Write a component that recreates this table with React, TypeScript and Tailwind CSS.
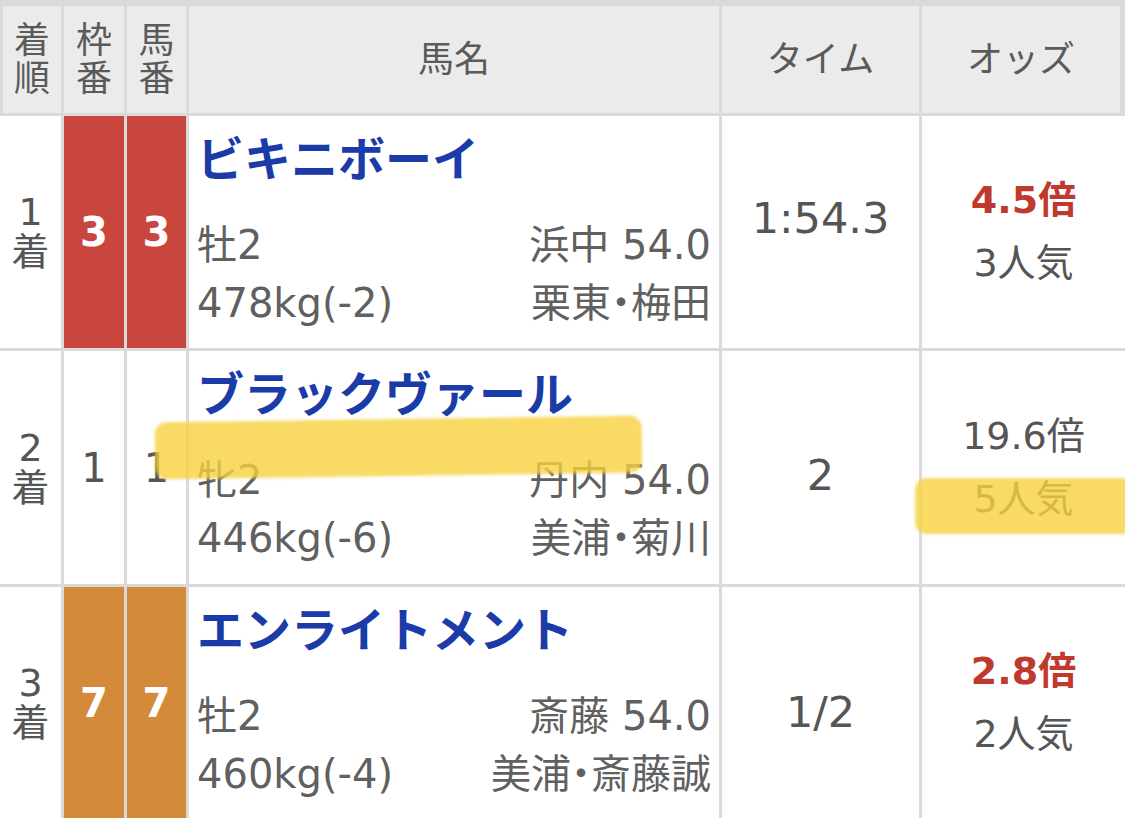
type Row = {
  rank: string;
  waku: string;
  uma: string;
  frame: string;
  numColor: string;
  name: string;
  sexAge: string;
  weight: string;
  jockey: string;
  trainer: string;
  time: string;
  timePad: string;
  odds: string;
  oddsClass: string;
  pop: string;
  height: string;
};

const rows: Row[] = [
  {
    rank: "1",
    waku: "3",
    uma: "3",
    frame: "bg-[#c9463e]",
    numColor: "text-white font-bold",
    name: "ビキニボーイ",
    sexAge: "牡2",
    weight: "478kg(-2)",
    jockey: "浜中 54.0",
    trainer: "栗東・梅田",
    time: "1:54.3",
    timePad: "pb-[28px]",
    odds: "4.5倍",
    oddsClass: "text-[#c0392f] font-bold",
    pop: "3人気",
    height: "h-[232px]",
  },
  {
    rank: "2",
    waku: "1",
    uma: "1",
    frame: "bg-white",
    numColor: "text-[#555]",
    name: "ブラックヴァール",
    sexAge: "牝2",
    weight: "446kg(-6)",
    jockey: "丹内 54.0",
    trainer: "美浦・菊川",
    time: "2",
    timePad: "pt-[16px]",
    odds: "19.6倍",
    oddsClass: "text-[#555]",
    pop: "5人気",
    height: "h-[233px]",
  },
  {
    rank: "3",
    waku: "7",
    uma: "7",
    frame: "bg-[#d48a3b]",
    numColor: "text-white font-bold",
    name: "エンライトメント",
    sexAge: "牡2",
    weight: "460kg(-4)",
    jockey: "斎藤 54.0",
    trainer: "美浦・斎藤誠",
    time: "1/2",
    timePad: "pt-[18px]",
    odds: "2.8倍",
    oddsClass: "text-[#c0392f] font-bold",
    pop: "2人気",
    height: "h-[232px]",
  },
];

const cols = "grid grid-cols-[61px_60px_59px_530px_197px_203px] gap-x-[3px]";

function Header() {
  return (
    <div className={`${cols} h-[107px] text-[36px] leading-[38px] text-[#5a5a5a]`}>
      <div className="flex flex-col items-center justify-center border-l-[3px] border-[#dadada] bg-[#ebebeb]">
        <span>着</span>
        <span>順</span>
      </div>
      <div className="flex flex-col items-center justify-center bg-[#ebebeb]">
        <span>枠</span>
        <span>番</span>
      </div>
      <div className="flex flex-col items-center justify-center bg-[#ebebeb]">
        <span>馬</span>
        <span>番</span>
      </div>
      <div className="flex items-center justify-center bg-[#ebebeb]">馬名</div>
      <div className="flex items-center justify-center bg-[#ebebeb]">タイム</div>
      <div className="flex items-center justify-center border-r-[5px] border-[#dadada] bg-[#ebebeb]">
        オッズ
      </div>
    </div>
  );
}

function ResultRow({ r }: { r: Row }) {
  return (
    <div className={`${cols} ${r.height} mt-[3px]`}>
      <div className="flex flex-col items-center justify-center bg-white text-[38px] leading-[40px] text-[#555]">
        <span>{r.rank}</span>
        <span>着</span>
      </div>
      <div className={`flex items-center justify-center ${r.frame} ${r.numColor} text-[40px]`}>
        {r.waku}
      </div>
      <div className={`flex items-center justify-center ${r.frame} ${r.numColor} text-[40px]`}>
        {r.uma}
      </div>
      <div className="bg-white pl-[8px] pr-[8px] pt-[16px]">
        <div className="text-[47px] font-bold leading-[56px] text-[#1a3ba8] whitespace-nowrap">
          {r.name}
        </div>
        <div className="mt-[28px] flex justify-between text-[40px] leading-[58px] text-[#606060]">
          <span>{r.sexAge}</span>
          <span>{r.jockey}</span>
        </div>
        <div className="flex justify-between text-[40px] leading-[58px] text-[#606060]">
          <span>{r.weight}</span>
          <span className="[font-feature-settings:'palt']">{r.trainer}</span>
        </div>
      </div>
      <div className={`flex items-center justify-center bg-white text-[43px] text-[#555] ${r.timePad}`}>
        {r.time}
      </div>
      <div className="flex flex-col items-center justify-center bg-white text-[38px] leading-[63px]">
        <span className={r.oddsClass}>{r.odds}</span>
        <span className="text-[#555]">{r.pop}</span>
      </div>
    </div>
  );
}

export default function App() {
  return (
    <div className="h-[818px] w-[1125px] overflow-hidden bg-white font-['DejaVu_Sans','Noto_Sans_CJK_JP',sans-serif]">
      <div className="relative bg-[#dadada] pt-[6px]">
        <Header />
        {rows.map((r) => (
          <ResultRow key={r.rank} r={r} />
        ))}

        {/* marker highlights drawn over the screenshot */}
        <div className="pointer-events-none absolute left-[155px] top-[419px] h-[57px] w-[487px] -rotate-[0.8deg] rounded-[12px] bg-[#f6d13f]/80 blur-[1.5px]" />
        <div className="pointer-events-none absolute left-[915px] top-[478px] h-[56px] w-[220px] rounded-[12px] bg-[#f6d13f]/80 blur-[1.5px]" />
      </div>
    </div>
  );
}
